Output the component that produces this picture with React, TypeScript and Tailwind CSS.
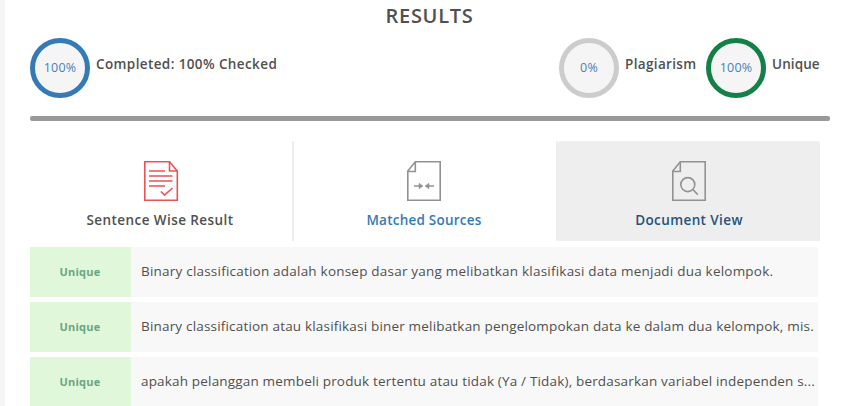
import React from 'react';

function Ring({ value, color }: { value: string; color: string }) {
  return (
    <div className={`flex h-[60px] w-[60px] shrink-0 items-center justify-center rounded-full border-5 bg-[#f5f5f5] text-[12.5px] font-normal tracking-[0.2px] text-[#4a7fb8] ${color}`}>
      {value}
    </div>
  );
}

function SentenceIcon() {
  return (
    <svg width="36" height="42" viewBox="0 0 36 42" fill="none" stroke="#e95356" strokeWidth="1.6">
      <path d="M1.8 1.8H26.5L34.3 11V40.2H1.8Z" />
      <path d="M26.5 1.8V11H34.3" />
      <path d="M6 11H22M6 16H29.5M6 21H29.5M6 26H22" strokeWidth="1.6" />
      <path d="M18 31.5L21.5 35.2L29.5 28" />
    </svg>
  );
}

function PageOutline() {
  return (
    <>
      <path d="M9.3 1.8H34.2V40.2H1.8V11Z" />
      <path d="M9.3 1.8V11.5H1.8" />
    </>
  );
}

function MatchedIcon() {
  return (
    <svg width="36" height="42" viewBox="0 0 36 42" fill="none" stroke="#929292" strokeWidth="1.6">
      <PageOutline />
      <path d="M8 26H14M28 26H22" />
      <path d="M13 23.2L17 26L13 28.8ZM23 23.2L19 26L23 28.8Z" fill="#929292" strokeWidth="0.5" />
    </svg>
  );
}

function DocumentIcon() {
  return (
    <svg width="36" height="42" viewBox="0 0 36 42" fill="none" stroke="#929292" strokeWidth="1.6">
      <PageOutline />
      <circle cx="16.8" cy="24.6" r="7" />
      <path d="M21.8 29.5L26.8 34.6" />
    </svg>
  );
}

const rows = [
  { text: 'Binary classification adalah konsep dasar yang melibatkan klasifikasi data menjadi dua kelompok.', spacing: 'tracking-[0.215px]' },
  { text: 'Binary classification atau klasifikasi biner melibatkan pengelompokan data ke dalam dua kelompok, mis.', spacing: 'tracking-[0.185px]' },
  { text: 'apakah pelanggan membeli produk tertentu atau tidak (Ya / Tidak), berdasarkan variabel independen s...', spacing: 'tracking-[0.175px]' },
];

export default function App() {
  return (
    <div className="h-[406px] w-full overflow-hidden border-l-5 border-[#f5f5f5] bg-white pl-[25px] font-['Open_Sans',sans-serif] whitespace-nowrap text-[#505050]">
      <h1 className="h-[38px] w-[799px] pt-[1px] text-center text-[20px] leading-[30px] font-semibold tracking-[0.7px]">RESULTS</h1>
      <div className="flex h-[60px] w-[800px] text-[13.5px] leading-5 font-semibold">
        <Ring value="100%" color="border-[#337ab7]" />
        <span className="mt-4 ml-[6px] tracking-[0.39px]">Completed: 100% Checked</span>
        <div className="ml-auto flex w-[271px]">
          <Ring value="0%" color="border-[#cccccc]" />
          <span className="mt-4 ml-[6px] w-[81px] tracking-[0.35px]">Plagiarism</span>
          <Ring value="100%" color="border-[#138048]" />
          <span className="mt-4 ml-[6px] tracking-[0.1px]">Unique</span>
        </div>
      </div>
      <div className="mt-[18px] h-[5px] w-[800px] rounded-[2px] bg-[#999999]" />
      <div className="mt-5 flex h-[100px] w-[790px] text-[13.5px] leading-5 font-semibold">
        <div className="flex w-[264px] flex-col items-center border-r-2 border-[#eeeeee] pt-[19px]">
          <SentenceIcon />
          <span className="mt-2 mr-[2px] tracking-[0.43px]">Sentence Wise Result</span>
        </div>
        <div className="flex w-[264px] flex-col items-center border-r-2 border-[#eeeeee] pt-[19px] pr-[2px] text-[#337ab7]">
          <MatchedIcon />
          <span className="mt-2 tracking-[0.23px]">Matched Sources</span>
        </div>
        <div className="flex w-[262px] flex-col items-center rounded-t-[3px] bg-[#eeeeee] pt-[19px] text-[#23527c]">
          <DocumentIcon />
          <span className="mt-2 tracking-[0.4px]">Document View</span>
        </div>
      </div>
      <div className="mt-[6px] flex w-[788px] flex-col gap-[5px]">
        {rows.map((row) => (
          <div key={row.text} className="flex h-[50px] items-center bg-[#f8f8f8]">
            <div className="flex h-full w-[101px] shrink-0 items-center justify-center bg-[#e1f7da] pr-[1px] text-[11px] font-bold tracking-[0.25px] text-[#6ba583]">Unique</div>
            <span className={`ml-[10px] pb-[2px] text-[13.5px] ${row.spacing}`}>{row.text}</span>
          </div>
        ))}
      </div>
    </div>
  );
}
